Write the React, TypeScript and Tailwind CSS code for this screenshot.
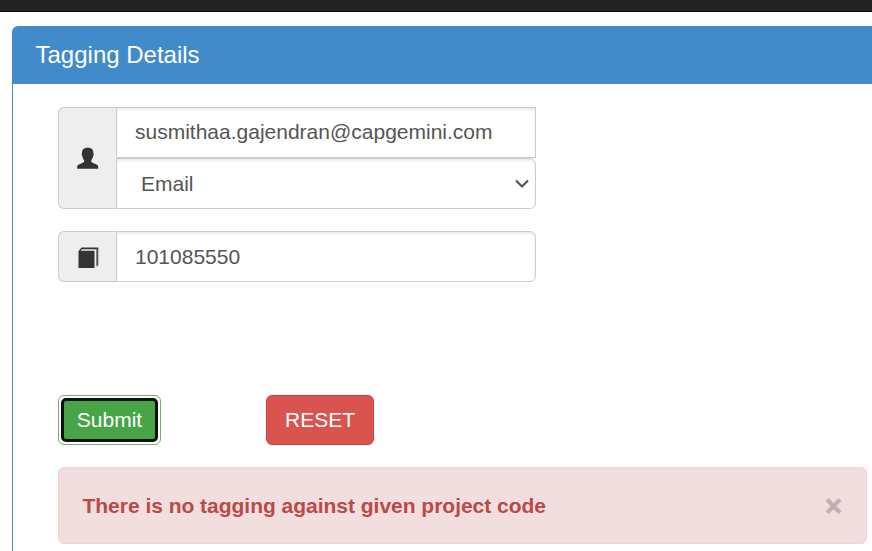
function UserIcon() {
  return (
    <svg viewBox="0 0 22 22" className="h-[22px] w-[22px]" fill="#333">
      <path d="M10.700 0.800c3.700 0 5.700 1.900 5.700 5 0 .7.4 1.200.3 2-.1.900-.6 1.200-.8 1.900-.3 1.500-.8 2.500-1.600 3.300v1.300c0 .7.500 1.100 1.300 1.500l3.900 1.800c1.200.6 1.700 1.200 1.700 2.300v1.900H.2v-1.900c0-1.100.5-1.700 1.700-2.300l3.900-1.800c.8-.4 1.300-.8 1.300-1.500v-1.300c-.8-.8-1.300-1.800-1.600-3.300-.2-.7-.7-1-.8-1.900-.1-.8.3-1.300.3-2 0-3.100 2-5 5.700-5z" />
    </svg>
  );
}

function BookIcon() {
  return (
    <svg viewBox="0 0 22 22" className="h-[22px] w-[22px]">
      <path d="M1.500 5.200 4.500 1.500H21.300V3.300H5L3.700 4.800H17.500V22H1.500z" fill="#333" />
      <path d="M19.300 2.500h2V19.300l-2 1.200z" fill="#555" />
    </svg>
  );
}

export default function App() {
  return (
    <div className="h-[551px] w-[872px] overflow-hidden bg-white font-['Liberation_Sans',Arial,sans-serif] text-[21px] leading-[30px] text-[#555]">
      <div className="h-3 border-b border-[#080808] bg-[#222]" />
      <div className="mt-3.5 ml-3 h-[600px] w-[900px] rounded-md border border-[#428bca] bg-white">
        <div className="flex h-[57px] items-center rounded-t-[4px] bg-[#428bca] pb-[2px] pl-[22.500px] text-[24px] text-white">
          <span className="whitespace-nowrap">Tagging Details</span>
        </div>
        <div className="pt-[23px] pl-[45px]">
          <div className="flex h-[102px] w-[478px]">
            <div className="flex w-[58px] items-center justify-center rounded-l-md border border-r-0 border-[#ccc] bg-[#eee]">
              <UserIcon />
            </div>
            <div className="flex flex-1 flex-col">
              <div className="flex h-[51px] items-center border border-[#ccc] pb-px pl-[18px] shadow-[inset_0_2px_2px_rgba(0,0,0,0.075)]">
                <span className="whitespace-nowrap">susmithaa.gajendran@capgemini.com</span>
              </div>
              <div className="flex h-[51px] items-center justify-between rounded-r-md border border-[#ccc] pr-[6px] pl-6 shadow-[inset_0_2px_2px_rgba(0,0,0,0.075)]">
                <span>Email</span>
                <svg viewBox="0 0 14 10" className="h-[10px] w-[14px]" fill="none" stroke="#555" strokeWidth="2.200">
                  <path d="M1 1.500 7 7.500 13 1.500" />
                </svg>
              </div>
            </div>
          </div>
          <div className="mt-[22px] flex h-[51px] w-[478px]">
            <div className="flex w-[58px] items-center justify-center rounded-l-md border border-r-0 border-[#ccc] bg-[#eee]">
              <BookIcon />
            </div>
            <div className="flex flex-1 items-center rounded-r-md border border-[#ccc] pl-[18px] shadow-[inset_0_2px_2px_rgba(0,0,0,0.075)]">
              <span>101085550</span>
            </div>
          </div>
          <div className="mt-[113px] flex gap-[105px] text-white">
            <button className="flex h-[50px] w-[103px] rounded-md border border-[#6fae6f] bg-white p-[2px]">
              <span className="flex h-full w-full items-center justify-center rounded-[5px] border-3 border-[#101010] bg-[#47a447]">
                Submit
              </span>
            </button>
            <button className="flex h-[50px] w-[108px] items-center justify-center rounded-md border border-[#d43f3a] bg-[#d9534f]">
              RESET
            </button>
          </div>
          <div className="mt-[22px] flex h-[77px] w-[809px] items-center justify-between rounded-md border border-[#eed3d7] bg-[#f2dede] pr-6 pl-[23.500px] font-bold text-[#b94a48]">
            <span className="pt-px tracking-[-0.020px] whitespace-nowrap">There is no tagging against given project code</span>
            <span className="text-[29px] text-black opacity-20 [-webkit-text-stroke:1px_#000] [text-shadow:0_1px_0_#fff]">×</span>
          </div>
        </div>
      </div>
    </div>
  );
}
